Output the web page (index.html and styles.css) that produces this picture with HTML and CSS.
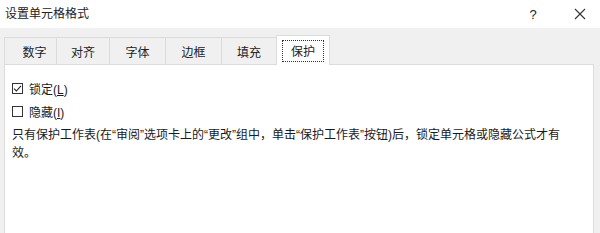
FILE: index.html
```html
<!DOCTYPE html>
<html>
<head>
<meta charset="utf-8">
<link rel="stylesheet" href="styles.css">
</head>
<body>
<div class="dialog">
  <div class="titlebar">
    <span class="title">设置单元格格式</span>
    <div class="title-buttons">
      <span class="help">?</span>
      <span class="close">
        <svg width="12" height="12" viewBox="0 0 12 12"><path d="M1 1 L11 11 M11 1 L1 11" stroke="#333" stroke-width="1.1" fill="none"/></svg>
      </span>
    </div>
  </div>
  <div class="body">
    <div class="tabs">
      <div class="tab tab-first">数字</div>
      <div class="tab tab-n">对齐</div>
      <div class="tab tab-w">字体</div>
      <div class="tab tab-w">边框</div>
      <div class="tab tab-m">填充</div>
      <div class="tab tab-n tab-active"><span class="focus">保护</span></div>
    </div>
    <div class="panel">
      <label class="check"><span class="box checked"><svg width="9" height="9" viewBox="0 0 9 9"><path d="M1 4.6 L3.4 7 L8 1.8" stroke="#222" stroke-width="1.1" fill="none"/></svg></span><span>锁定(<u>L</u>)</span></label>
      <label class="check"><span class="box"></span><span>隐藏(<u>I</u>)</span></label>
      <p class="note">只有保护工作表(在“审阅”选项卡上的“更改”组中，单击“保护工作表”按钮)后，锁定单元格或隐藏公式才有效。</p>
    </div>
  </div>
</div>
</body>
</html>
```

FILE: styles.css
```css
html, body {
  margin: 0;
  padding: 0;
  background: #ffffff;
}
body {
  font-family: "Liberation Sans", "Noto Sans CJK SC", sans-serif;
  font-size: 12px;
  color: #1a1a1a;
}
.dialog {
  width: 600px;
  height: 233px;
  display: flex;
  flex-direction: column;
  overflow: hidden;
}
.titlebar {
  height: 28px;
  flex: none;
  display: flex;
  align-items: center;
  justify-content: space-between;
  background: #ffffff;
  padding-left: 5px;
}
.title {
  font-size: 12px;
  color: #222;
  line-height: 28px;
}
.title-buttons {
  display: flex;
  align-items: center;
}
.help {
  font-size: 13px;
  color: #222;
  width: 12px;
  text-align: center;
  margin-right: 34px;
}
.close {
  display: flex;
  width: 14px;
  justify-content: center;
  margin-right: 13px;
}
.body {
  flex: 1;
  background: #f0f0f0;
  display: flex;
  flex-direction: column;
  padding: 9px 6px 0 4px;
}
.tabs {
  display: flex;
  height: 27px;
  flex: none;
  position: relative;
  z-index: 1;
}
.tab {
  border: 1px solid #dcdcdc;
  border-bottom: none;
  border-left: none;
  background: #f0f0f0;
  display: flex;
  align-items: center;
  justify-content: center;
  color: #222;
  box-sizing: border-box;
  height: 27px;
}
.tab-first { width: 53px; padding-left: 8px; border-left: 1px solid #dcdcdc; }
.tab-n { width: 53px; }
.tab-w { width: 56px; }
.tab-m { width: 55px; }
.tab-active {
  background: #ffffff;
  height: 30px;
  margin-top: -2px;
  border-left: 1px solid #dcdcdc;
  margin-left: -1px;
  width: 54px;
  padding-top: 1px;
}
.focus {
  border: 1px dotted #333;
  width: 42px;
  height: 22px;
  display: flex;
  align-items: center;
  justify-content: center;
  box-sizing: border-box;
  margin-bottom: 1px;
}
.panel {
  flex: 1;
  background: #ffffff;
  border: 1px solid #dcdcdc;
  border-bottom: none;
  padding: 12px 14px 0 7px;
}
.check {
  display: flex;
  align-items: center;
  height: 23px;
  gap: 6px;
}
.box {
  width: 11px;
  height: 11px;
  border: 1px solid #333;
  box-sizing: border-box;
  display: flex;
  align-items: center;
  justify-content: center;
  background: #fff;
}
.check u {
  text-decoration: underline;
}
.note {
  margin: 3px 0 0 0;
  line-height: 18px;
  color: #1a1a1a;
}
```
